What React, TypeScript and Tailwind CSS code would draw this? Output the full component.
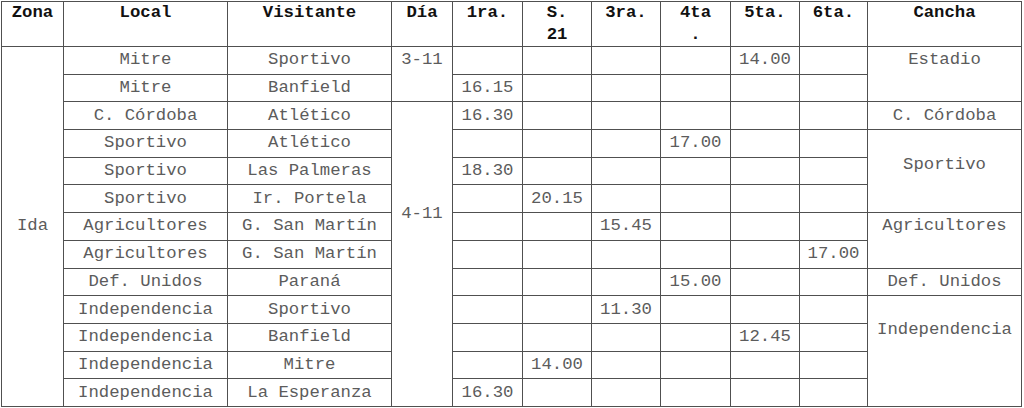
type Row = {
  local: string
  visitante: string
  slot: number
  time: string
}

const rows: Row[] = [
  { local: 'Mitre', visitante: 'Sportivo', slot: 4, time: '14.00' },
  { local: 'Mitre', visitante: 'Banfield', slot: 0, time: '16.15' },
  { local: 'C. Córdoba', visitante: 'Atlético', slot: 0, time: '16.30' },
  { local: 'Sportivo', visitante: 'Atlético', slot: 3, time: '17.00' },
  { local: 'Sportivo', visitante: 'Las Palmeras', slot: 0, time: '18.30' },
  { local: 'Sportivo', visitante: 'Ir. Portela', slot: 1, time: '20.15' },
  { local: 'Agricultores', visitante: 'G. San Martín', slot: 2, time: '15.45' },
  { local: 'Agricultores', visitante: 'G. San Martín', slot: 5, time: '17.00' },
  { local: 'Def. Unidos', visitante: 'Paraná', slot: 3, time: '15.00' },
  { local: 'Independencia', visitante: 'Sportivo', slot: 2, time: '11.30' },
  { local: 'Independencia', visitante: 'Banfield', slot: 4, time: '12.45' },
  { local: 'Independencia', visitante: 'Mitre', slot: 1, time: '14.00' },
  { local: 'Independencia', visitante: 'La Esperanza', slot: 0, time: '16.30' },
]

// cancha cells: row index where it starts -> [rowSpan, label, padding class]
const cancha: Record<number, [number, string, string]> = {
  0: [2, 'Estadio', 'align-top pt-[3px]'],
  2: [1, 'C. Córdoba', 'align-middle'],
  3: [3, 'Sportivo', 'align-top pt-[25px]'],
  6: [2, 'Agricultores', 'align-top pt-[3px]'],
  8: [1, 'Def. Unidos', 'align-middle'],
  9: [4, 'Independencia', 'align-top pt-[24px]'],
}

const td = 'border border-[#505050] text-center leading-[20px] p-0'
const th = 'border border-[#505050] text-center align-top leading-[22px] pt-0 px-0 font-bold text-[#111]'

export default function App() {
  return (
    <div className="bg-white w-[1024px] h-[408px] overflow-hidden pl-px pt-px font-['Liberation_Mono','Courier_New',monospace] text-[17.3px]">
      <table className="border-collapse table-fixed w-[1020px]">
        <colgroup>
          <col className="w-[62px]" />
          <col className="w-[164px]" />
          <col className="w-[164px]" />
          <col className="w-[61px]" />
          <col className="w-[70px]" />
          <col className="w-[69px]" />
          <col className="w-[69px]" />
          <col className="w-[70px]" />
          <col className="w-[69px]" />
          <col className="w-[68px]" />
          <col className="w-[154px]" />
        </colgroup>
        <thead>
          <tr className="h-[45px]">
            <th className={th}>Zona</th>
            <th className={th}>Local</th>
            <th className={th}>Visitante</th>
            <th className={th}>Día</th>
            <th className={th}>1ra.</th>
            <th className={th}>
              S.
              <br />
              21
            </th>
            <th className={th}>3ra.</th>
            <th className={th}>
              4ta
              <br />.
            </th>
            <th className={th}>5ta.</th>
            <th className={th}>6ta.</th>
            <th className={th}>Cancha</th>
          </tr>
        </thead>
        <tbody className="text-[#5c5c5c]">
          {rows.map((r, i) => (
            <tr key={i} className="h-[27.7px]">
              {i === 0 && (
                <td rowSpan={13} className={`${td} align-middle`}>
                  Ida
                </td>
              )}
              <td className={`${td} align-middle`}>{r.local}</td>
              <td className={`${td} align-middle`}>{r.visitante}</td>
              {i === 0 && (
                <td rowSpan={2} className={`${td} align-top pt-[3px]`}>
                  3-11
                </td>
              )}
              {i === 2 && (
                <td rowSpan={11} className={`${td} align-top pt-[102px]`}>
                  4-11
                </td>
              )}
              {[0, 1, 2, 3, 4, 5].map((s) => (
                <td key={s} className={`${td} align-middle`}>
                  {r.slot === s ? r.time : ''}
                </td>
              ))}
              {cancha[i] && (
                <td rowSpan={cancha[i][0]} className={`${td} ${cancha[i][2]}`}>
                  {cancha[i][1]}
                </td>
              )}
            </tr>
          ))}
        </tbody>
      </table>
    </div>
  )
}
